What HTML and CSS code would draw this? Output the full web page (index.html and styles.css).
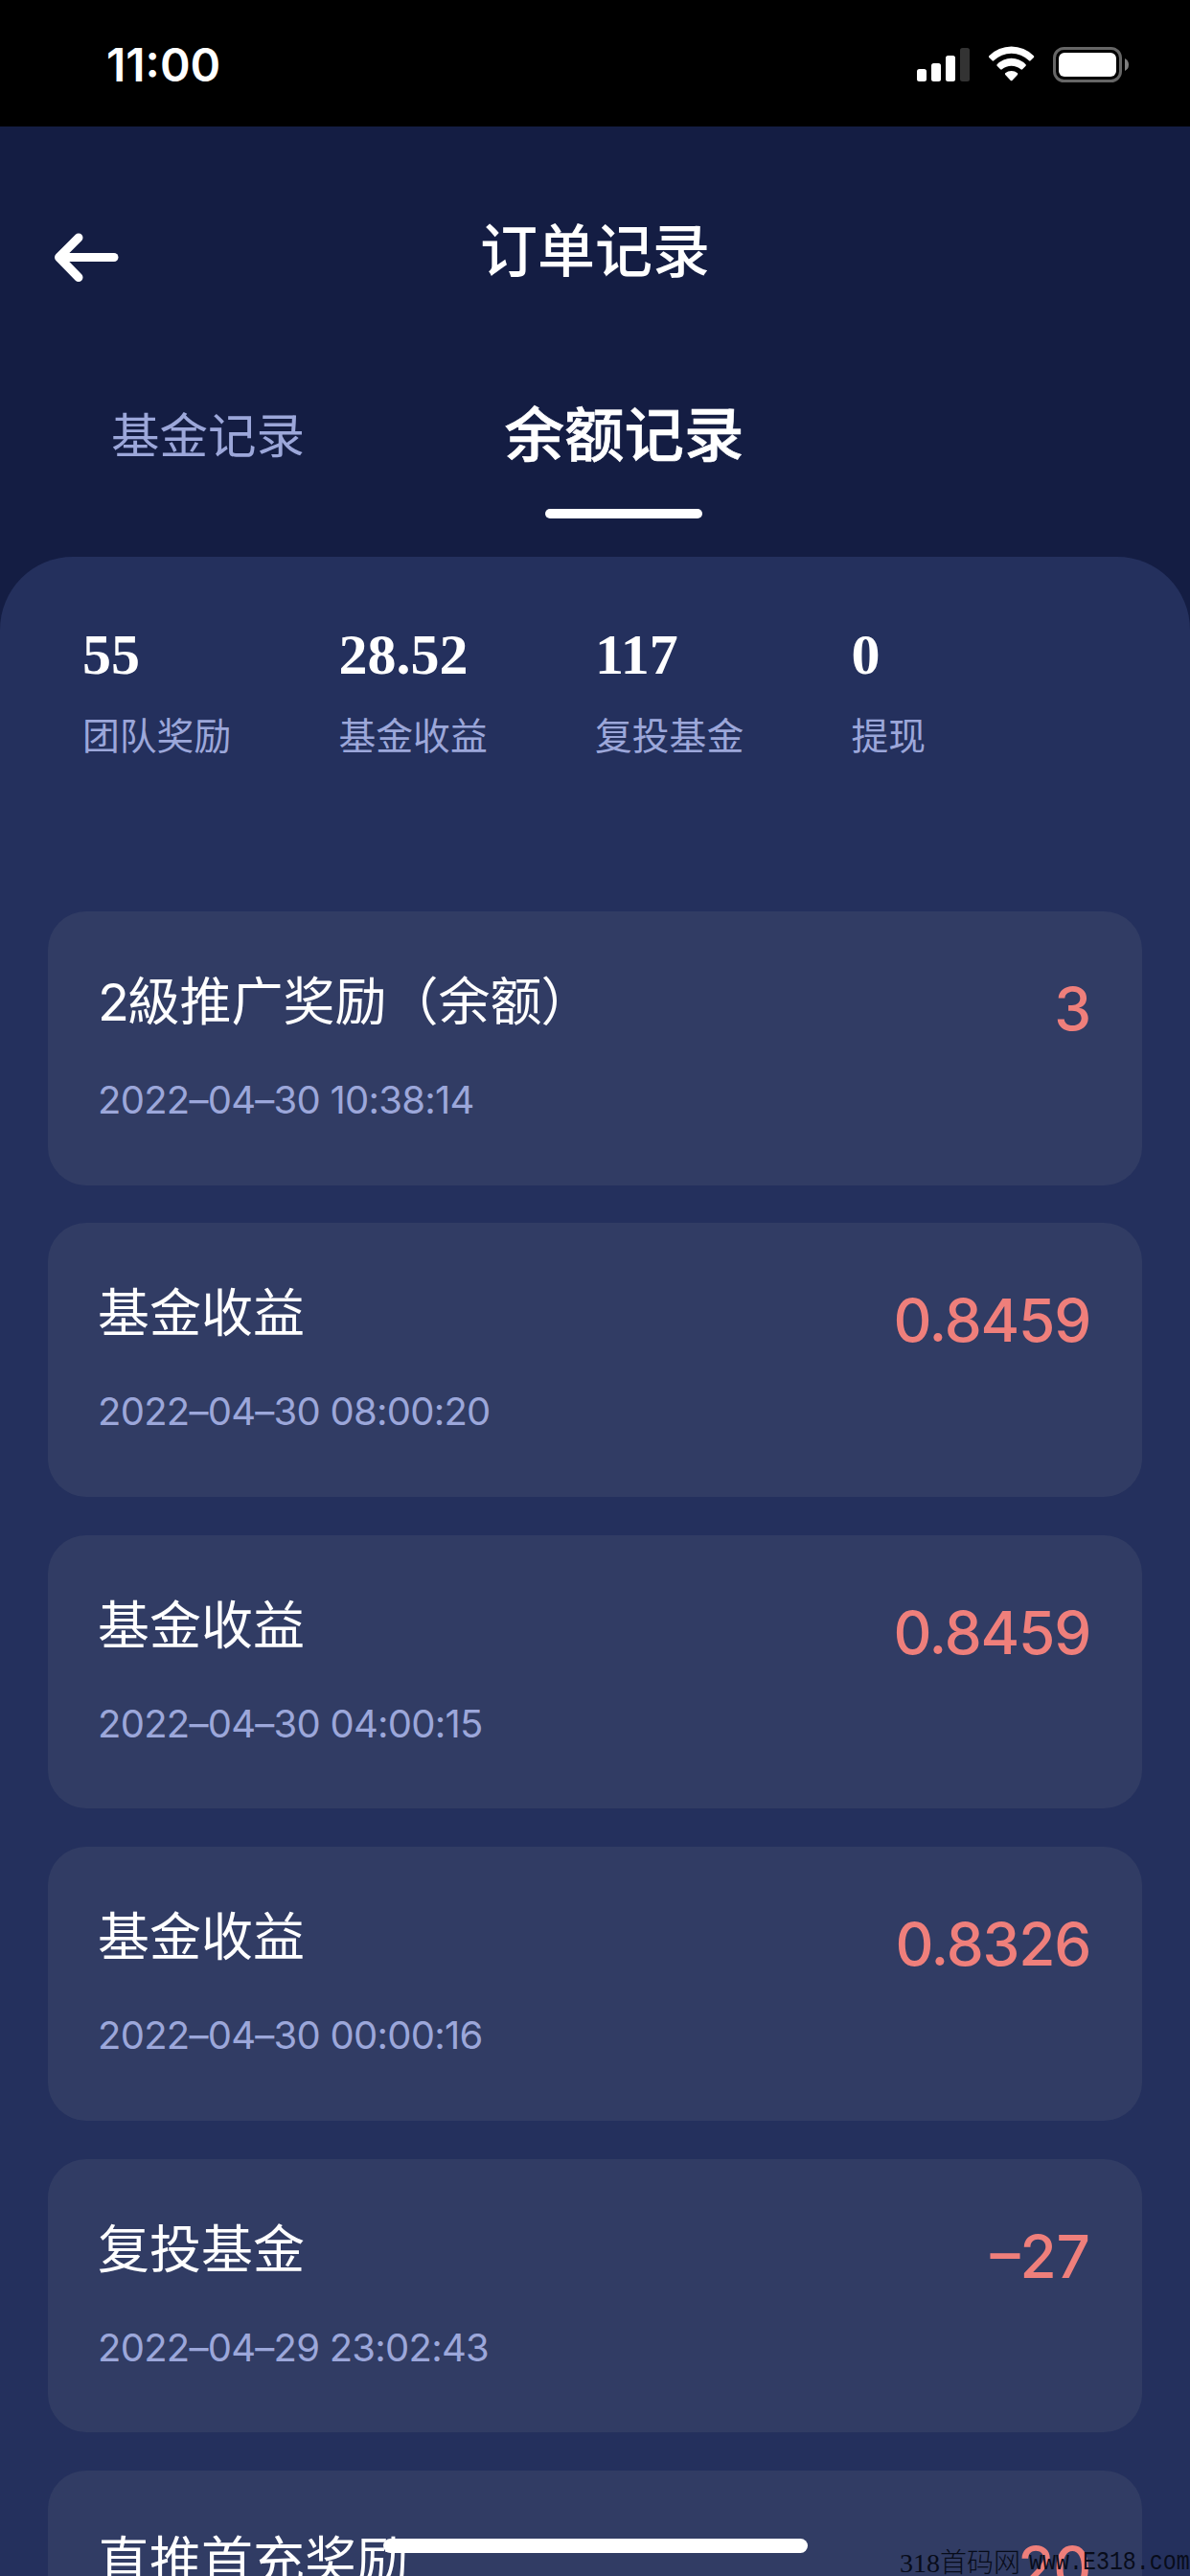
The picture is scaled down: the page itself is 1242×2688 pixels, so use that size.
FILE: index.html
```html
<!DOCTYPE html>
<html lang="zh-CN">
<head>
<meta charset="utf-8">
<title>订单记录</title>
<link rel="stylesheet" href="styles.css">
</head>
<body>
<div class="screen">
  <div class="status">
    <span class="clock">11:00</span>
    <svg class="status-icons" width="222" height="40" viewBox="0 0 222 40">
      <g fill="#fff">
        <rect x="0" y="24" width="10" height="13" rx="2.5"/>
        <rect x="15" y="18" width="10" height="19" rx="2.5"/>
        <rect x="30" y="10" width="10" height="27" rx="2.5"/>
        <rect x="45" y="2" width="10" height="35" rx="2.5" fill="#333"/>
        <path d="M75.3 10.2A33 33 0 0 1 121.9 10.2Q122.7 11 121.9 12L118.6 15.3Q117.8 16 117 15.3A26 26 0 0 0 80.2 15.3Q79.4 16 78.6 15.3L75.3 12Q74.5 11 75.3 10.2Z"/>
        <path d="M83.6 19.2A20.5 20.5 0 0 1 113.6 19.2Q114.2 20 113.6 20.7L110.1 24.2Q109.2 25 108.4 24.3A15 15 0 0 0 88.8 24.3Q88 25 87.1 24.2L83.6 20.7Q83 20 83.6 19.2Z"/>
        <path d="M92.2 28.2A10 10 0 0 1 105 28.2Q105.7 29 105 29.9L99.4 35.9Q98.6 36.8 97.8 35.9L92.2 29.9Q91.5 29 92.2 28.2Z"/>
        <rect x="148" y="7" width="60" height="25" rx="6"/>
      </g>
      <rect x="143.5" y="2.5" width="69" height="34" rx="10" fill="none" stroke="#666" stroke-width="3"/>
      <path d="M217 13Q221 15 221 19.500Q221 24 217 26Z" fill="#7f7f7f"/>
    </svg>
  </div>
  <header class="nav">
    <svg class="back" width="70" height="54" viewBox="0 0 70 54" fill="none" stroke="#fff" stroke-width="9" stroke-linecap="round">
      <path d="M65 26.500H10"/><path d="M28 6L7.500 26.500L28 47.500" stroke-linejoin="round"/>
    </svg>
    <h1 class="title">订单记录</h1>
    <span></span>
  </header>
  <nav class="tabs">
    <a class="tab">基金记录</a>
    <a class="tab active"><span class="tab-text">余额记录</span></a>
  </nav>
  <main class="panel">
    <section class="stats">
      <div class="stat"><b class="num">55</b><span class="label">团队奖励</span></div>
      <div class="stat"><b class="num">28.52</b><span class="label">基金收益</span></div>
      <div class="stat"><b class="num">117</b><span class="label">复投基金</span></div>
      <div class="stat"><b class="num">0</b><span class="label">提现</span></div>
    </section>
    <section class="list">
      <article class="card"><div class="info"><div class="name"><span class="digit">2</span>級推广奖励（余额<span class="paren-close">）</span></div><div class="date">2022–04–30 10:38:14</div></div><div class="amount">3</div></article>
      <article class="card"><div class="info"><div class="name">基金收益</div><div class="date">2022–04–30 08:00:20</div></div><div class="amount">0.8459</div></article>
      <article class="card"><div class="info"><div class="name">基金收益</div><div class="date">2022–04–30 04:00:15</div></div><div class="amount">0.8459</div></article>
      <article class="card"><div class="info"><div class="name">基金收益</div><div class="date">2022–04–30 00:00:16</div></div><div class="amount">0.8326</div></article>
      <article class="card"><div class="info"><div class="name">复投基金</div><div class="date">2022–04–29 23:02:43</div></div><div class="amount negative">–27</div></article>
      <article class="card"><div class="info"><div class="name">直推首充奖励</div></div><div class="amount">20</div></article>
    </section>
  </main>
  <div class="home-bar"></div>
  <div class="watermark"><span class="cn">318首码网</span><span class="url">www.E318.com</span></div>
</div>
</body>
</html>
```
FILE: styles.css
```css
* { box-sizing: border-box; }
body {
  margin: 0;
  background: #141d43;
  font-family: Inter, "Noto Sans CJK SC", sans-serif;
  color: #fff;
}
.screen {
  position: relative;
  display: flex;
  flex-direction: column;
  width: 1242px;
  height: 2688px;
  overflow: hidden;
}
.status {
  flex: none;
  display: flex;
  justify-content: space-between;
  align-items: flex-start;
  height: 132px;
  padding: 48px 63px 0 111px;
  background: #000;
}
.clock { font-size: 48px; line-height: 40px; font-weight: 600; }
.nav {
  flex: none;
  display: grid;
  grid-template-columns: 1fr auto 1fr;
  height: 259px;
  padding: 0 54px;
}
.back { margin-top: 110px; }
.title {
  margin: 85px 0 0;
  font-size: 60px;
  line-height: 90px;
  font-weight: 500;
}
.tabs {
  flex: none;
  display: flex;
  height: 190px;
}
.tab {
  display: flex;
  flex-direction: column;
  align-items: center;
  width: 434px;
  font-size: 50.500px;
  line-height: 128px;
  color: #9ca7da;
}
.tab.active {
  font-size: 62.500px;
  line-height: 126px;
  font-weight: 500;
  color: #fff;
  -webkit-text-stroke: 0.6px #fff;
}
.tab-text { padding-left: 1px; }
.tab.active::after {
  content: "";
  width: 164px;
  height: 10px;
  margin-top: 14px;
  border-radius: 5px;
  background: #fff;
}
.panel {
  flex: 1;
  min-height: 0;
  padding: 0 50px;
  border-radius: 76px 76px 0 0;
  background: #24305d;
}
.stats { display: flex; height: 370px; padding: 66px 0 0 36px; }
.stat { display: flex; flex-direction: column; width: 267.500px; }
.num { font: bold 60px/72px "Liberation Serif", serif; }
.label { margin-top: 19px; font-size: 38.800px; line-height: 60px; color: #9ca7da; }
.list { display: flex; flex-direction: column; gap: 39.700px; }
.card {
  flex: none;
  display: flex;
  justify-content: space-between;
  height: 285.700px;
  padding: 0 54px 0 52px;
  border-radius: 40px;
  background: #313c64;
}
.name { margin-top: 55px; font-size: 54px; line-height: 80px; white-space: nowrap; }
.digit { letter-spacing: -1.500px; }
.paren-close { margin-left: -1px; }
.date { margin-top: 32px; font-size: 40px; line-height: 60px; letter-spacing: -0.750px; color: #9ca7da; }
.amount {
  margin-top: 62px;
  font-size: 62px;
  line-height: 80px;
  letter-spacing: -1.200px;
  font-weight: 500;
  color: #ef7f7b;
}
.negative { letter-spacing: 0; }
.home-bar {
  position: absolute;
  left: 400px;
  top: 2649px;
  width: 443px;
  height: 15px;
  border-radius: 8px;
  background: #fff;
}
.watermark {
  position: absolute;
  left: 939px;
  top: 2660px;
  display: flex;
  font: 28px/32px "Liberation Serif", "Noto Sans CJK SC", serif;
  height: 28px;
  color: #080c1a;
  white-space: nowrap;
}
.cn { width: 135px; font-weight: 300; line-height: 30px; }
.url {
  font: 23.300px/28px "Liberation Mono", monospace;
  transform: scaleY(1.2);
}
```
